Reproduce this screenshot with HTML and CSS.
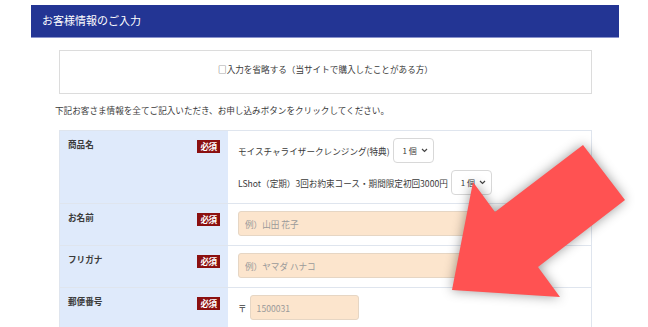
FILE: index.html
```html
<!DOCTYPE html>
<html lang="ja">
<head>
    <meta charset="UTF-8">
    <title>お客様情報のご入力</title>
    <link rel="stylesheet" href="styles.css">
</head>
<body>

<div class="screen">
    <div class="page">
        <h1 class="head">お客様情報のご入力</h1>

        <div class="skip">□入力を省略する（当サイトで購入したことがある方）</div>

        <p class="intro">下記お客さま情報を全てご記入いただき、お申し込みボタンをクリックしてください。</p>

        <div class="form">
            <div class="row row-first">
                <div class="label"><span>商品名</span><span class="must">必須</span></div>
                <div class="field">
                    <div class="line">
                        <span>モイスチャライザークレンジング(特典)</span>
                        <div class="select">1 個<svg width="7" height="5" viewBox="0 0 7 5"><path d="M1 1l2.5 2.5L6 1" fill="none" stroke="#444" stroke-width="1.2"/></svg></div>
                    </div>
                    <div class="line">
                        <span>LShot（定期）3回お約束コース・期間限定初回3000円</span>
                        <div class="select">1 個<svg width="7" height="5" viewBox="0 0 7 5"><path d="M1 1l2.5 2.5L6 1" fill="none" stroke="#444" stroke-width="1.2"/></svg></div>
                    </div>
                </div>
            </div>
            <div class="row">
                <div class="label"><span>お名前</span><span class="must">必須</span></div>
                <div class="field"><input class="text wide" type="text" placeholder="例）山田 花子"></div>
            </div>
            <div class="row">
                <div class="label"><span>フリガナ</span><span class="must">必須</span></div>
                <div class="field"><input class="text wide" type="text" placeholder="例）ヤマダ ハナコ"></div>
            </div>
            <div class="row">
                <div class="label"><span>郵便番号</span><span class="must">必須</span></div>
                <div class="field zip"><span>〒</span><input class="text short" type="text" placeholder="1500031"></div>
            </div>
        </div>
    </div>

    <svg class="arrow" width="648" height="327" viewBox="0 0 648 327">
        <polygon points="452,290 473,182 495,212 583,145 625,200 538,267 560,297" fill="#ff5252"/>
    </svg>
</div>

</body>
</html>
```

FILE: styles.css
```css
body {
    margin: 0;
    background-color: #fff;
    font-family: "Noto Sans CJK JP", "Noto Sans", sans-serif;
    font-size: 8.6px;
    color: #3a3a3a;
}
.screen {
    position: relative;
    width: 648px;
    height: 327px;
    overflow: hidden;
}
.page {
    width: 588px;
    margin-left: 31px;
    padding-top: 5px;
}
.head {
    margin: 0;
    height: 32px;
    line-height: 31px;
    padding-left: 11px;
    background-color: #233594;
    border-bottom: 1px solid #8a93cc;
    color: #fff;
    font-size: 11px;
    font-weight: normal;
}
.skip {
    margin: 12px 27px 0 28px;
    border: 1px solid #dcdcdc;
    text-align: center;
    line-height: 14px;
    padding-top: 11px;
    height: 31px;
}
.intro {
    margin: 9px 0 0 24px;
    line-height: 14px;
}
.form {
    margin: 13px 27px 0 28px;
    border: 1px solid #dfe5ee;
    border-bottom: none;
}
.row {
    display: grid;
    grid-template-columns: 168px 1fr;
    border-top: 1px solid #dfe5ee;
}
.row-first {
    border-top: none;
}
.label {
    background-color: #dfeafb;
    display: flex;
    justify-content: space-between;
    align-items: flex-start;
    padding: 7px 8px 0 8px;
    font-weight: bold;
    line-height: 12px;
}
.must {
    margin-top: 2px;
    background-color: #8b1010;
    color: #fff;
    font-size: 8.6px;
    line-height: 13px;
    width: 23px;
    text-align: center;
    letter-spacing: -0.5px;
}
.field {
    padding: 7px 10px 9px 10px;
}
.row-first .field {
    padding-bottom: 8px;
    display: flex;
    flex-direction: column;
    gap: 7px;
}
.line {
    display: flex;
    align-items: center;
    gap: 3px;
}
.select {
    width: 41px;
    height: 25px;
    box-sizing: border-box;
    border: 1px solid #d8d8d8;
    border-radius: 4px;
    background-color: #fff;
    display: flex;
    align-items: center;
    justify-content: space-between;
    padding: 0 5px 0 9px;
    font-size: 8px;
}
.text {
    display: block;
    height: 25px;
    box-sizing: border-box;
    background-color: #fce5cd;
    border: 1px solid #e6d6c4;
    border-radius: 3px;
    padding: 0 6px;
    font-family: "Noto Sans CJK JP", "Noto Sans", sans-serif;
    font-size: 8.6px;
    color: #333;
}
.text::placeholder {
    color: #9a9a9a;
}
.wide {
    width: 300px;
}
.short {
    width: 109px;
}
.zip {
    display: flex;
    align-items: center;
    gap: 3px;
}
.arrow {
    position: absolute;
    left: 0;
    top: 0;
    pointer-events: none;
    filter: drop-shadow(0 0 6px rgba(0, 0, 0, 0.4));
}
```
